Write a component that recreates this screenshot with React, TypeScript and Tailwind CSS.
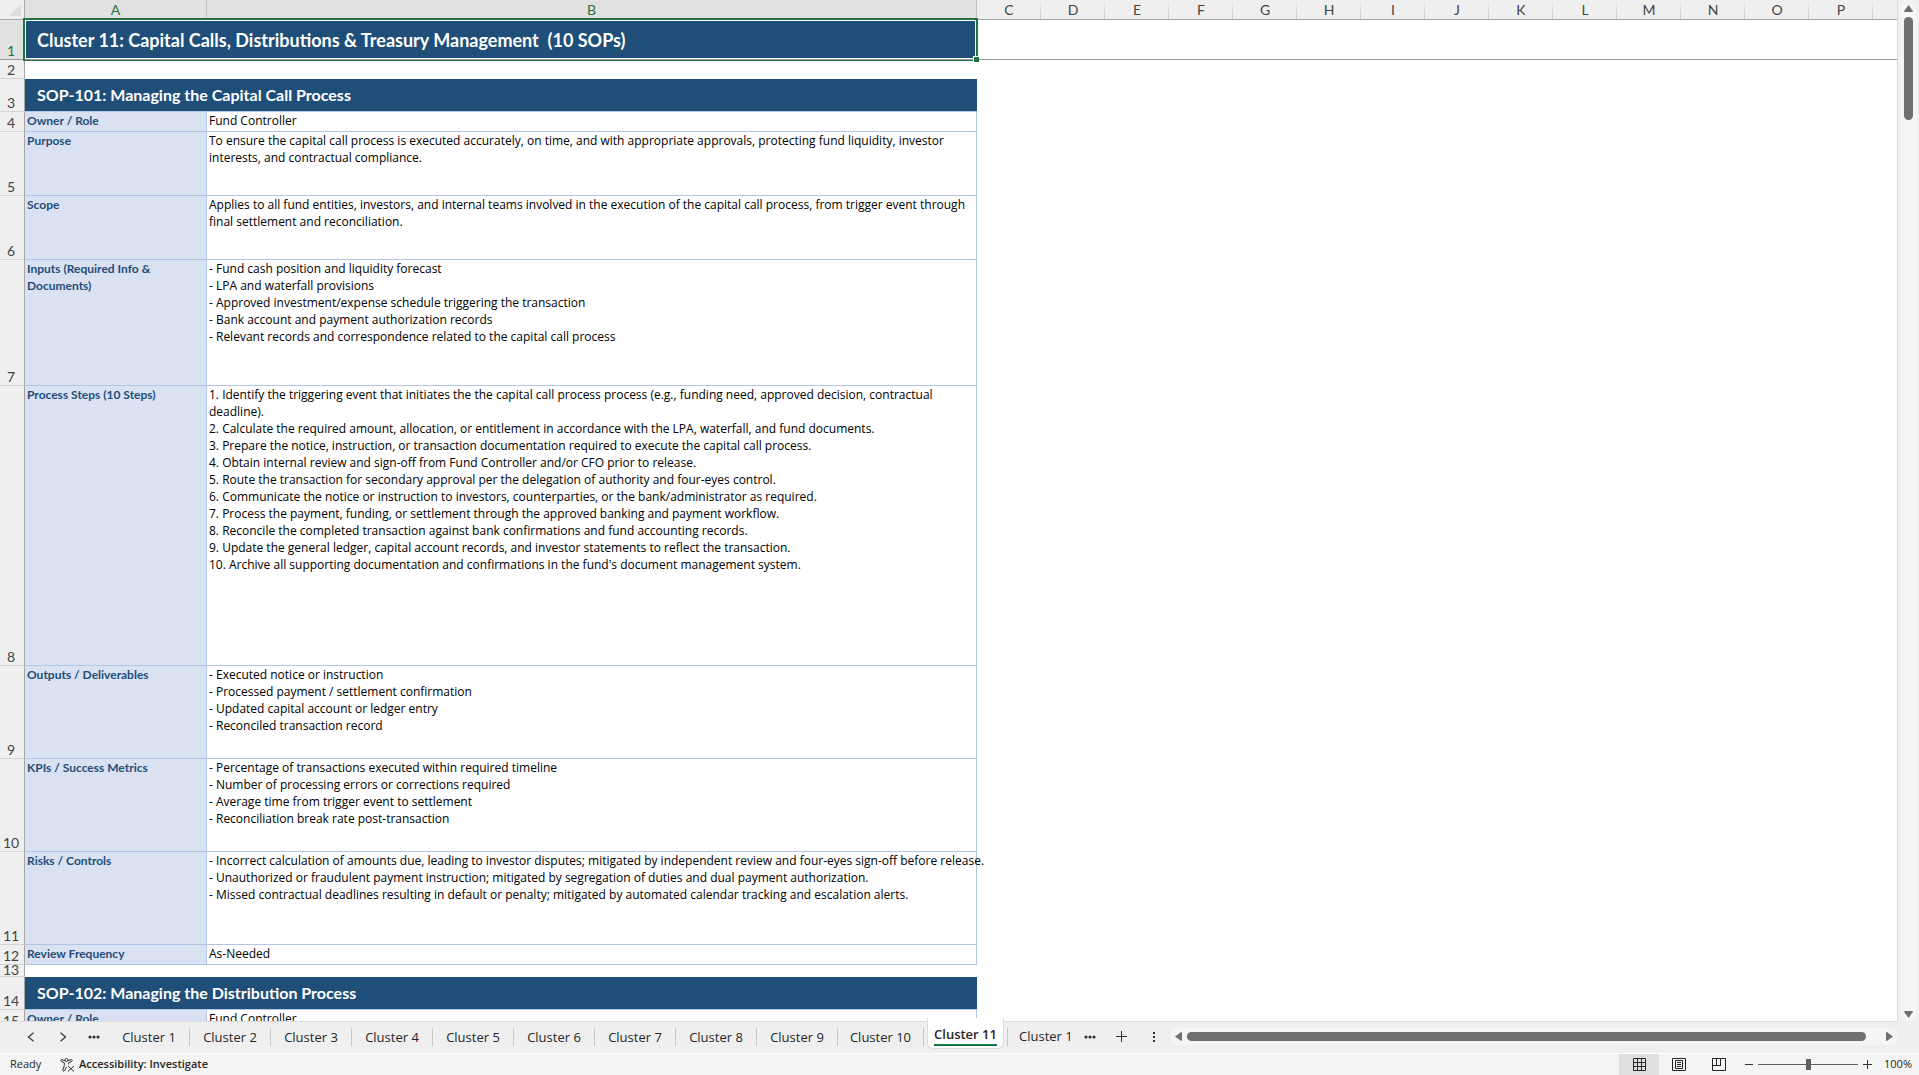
import React from "react";

type Row = {
  num: number;
  height: string;
  kind: "title" | "heading" | "field" | "blank";
  label?: string;
  lines?: string[];
};

const rows: Row[] = [
  {
    num: 1,
    height: "h-10",
    kind: "title",
    label: "Cluster 11: Capital Calls, Distributions & Treasury Management  (10 SOPs)",
  },
  { num: 2, height: "h-[19px]", kind: "blank" },
  {
    num: 3,
    height: "h-[33px]",
    kind: "heading",
    label: "SOP-101: Managing the Capital Call Process",
  },
  {
    num: 4,
    height: "h-5",
    kind: "field",
    label: "Owner / Role",
    lines: ["Fund Controller"],
  },
  {
    num: 5,
    height: "h-16",
    kind: "field",
    label: "Purpose",
    lines: [
      "To ensure the capital call process is executed accurately, on time, and with appropriate approvals, protecting fund liquidity, investor",
      "interests, and contractual compliance.",
    ],
  },
  {
    num: 6,
    height: "h-16",
    kind: "field",
    label: "Scope",
    lines: [
      "Applies to all fund entities, investors, and internal teams involved in the execution of the capital call process, from trigger event through",
      "final settlement and reconciliation.",
    ],
  },
  {
    num: 7,
    height: "h-[126px]",
    kind: "field",
    label: "Inputs (Required Info & Documents)",
    lines: [
      "- Fund cash position and liquidity forecast",
      "- LPA and waterfall provisions",
      "- Approved investment/expense schedule triggering the transaction",
      "- Bank account and payment authorization records",
      "- Relevant records and correspondence related to the capital call process",
    ],
  },
  {
    num: 8,
    height: "h-[280px]",
    kind: "field",
    label: "Process Steps (10 Steps)",
    lines: [
      "1. Identify the triggering event that initiates the the capital call process process (e.g., funding need, approved decision, contractual",
      "deadline).",
      "2. Calculate the required amount, allocation, or entitlement in accordance with the LPA, waterfall, and fund documents.",
      "3. Prepare the notice, instruction, or transaction documentation required to execute the capital call process.",
      "4. Obtain internal review and sign-off from Fund Controller and/or CFO prior to release.",
      "5. Route the transaction for secondary approval per the delegation of authority and four-eyes control.",
      "6. Communicate the notice or instruction to investors, counterparties, or the bank/administrator as required.",
      "7. Process the payment, funding, or settlement through the approved banking and payment workflow.",
      "8. Reconcile the completed transaction against bank confirmations and fund accounting records.",
      "9. Update the general ledger, capital account records, and investor statements to reflect the transaction.",
      "10. Archive all supporting documentation and confirmations in the fund's document management system.",
    ],
  },
  {
    num: 9,
    height: "h-[93px]",
    kind: "field",
    label: "Outputs / Deliverables",
    lines: [
      "- Executed notice or instruction",
      "- Processed payment / settlement confirmation",
      "- Updated capital account or ledger entry",
      "- Reconciled transaction record",
    ],
  },
  {
    num: 10,
    height: "h-[93px]",
    kind: "field",
    label: "KPIs / Success Metrics",
    lines: [
      "- Percentage of transactions executed within required timeline",
      "- Number of processing errors or corrections required",
      "- Average time from trigger event to settlement",
      "- Reconciliation break rate post-transaction",
    ],
  },
  {
    num: 11,
    height: "h-[93px]",
    kind: "field",
    label: "Risks / Controls",
    lines: [
      "- Incorrect calculation of amounts due, leading to investor disputes; mitigated by independent review and four-eyes sign-off before release.",
      "- Unauthorized or fraudulent payment instruction; mitigated by segregation of duties and dual payment authorization.",
      "- Missed contractual deadlines resulting in default or penalty; mitigated by automated calendar tracking and escalation alerts.",
    ],
  },
  {
    num: 12,
    height: "h-5",
    kind: "field",
    label: "Review Frequency",
    lines: ["As-Needed"],
  },
  { num: 13, height: "h-3", kind: "blank" },
  {
    num: 14,
    height: "h-[33px]",
    kind: "heading",
    label: "SOP-102: Managing the Distribution Process",
  },
  {
    num: 15,
    height: "h-5",
    kind: "field",
    label: "Owner / Role",
    lines: ["Fund Controller"],
  },
];

const columns = "CDEFGHIJKLMNOP".split("");

const sheets = [1, 2, 3, 4, 5, 6, 7, 8, 9, 10];

const columnRule =
  "bg-[linear-gradient(to_bottom,transparent,#c6c6c6)] bg-[length:1px_100%] bg-right bg-no-repeat";

const RowCells = ({ row }: { row: Row }) => {
  if (row.kind === "title") {
    return (
      <>
        <td
          colSpan={2}
          className="relative bg-[#1f4e78] pl-3 align-middle text-[18px] leading-5 font-bold whitespace-pre text-white"
        >
          {row.label}
          {/* Active cell outline and fill handle */}
          <span className="absolute -top-0.5 -right-px -bottom-px -left-0.5 border-2 border-[#217346]">
            <span className="block h-full border border-white"></span>
          </span>
          <span className="absolute inset-x-0 bottom-0 h-px bg-[#9b9b9b]"></span>
          <span className="absolute -right-0.5 -bottom-0.5 size-[6px] border-t border-l border-white bg-[#217346]"></span>
        </td>
        <td colSpan={15} className="border-b border-[#9b9b9b]"></td>
      </>
    );
  }

  if (row.kind === "blank") {
    return <td colSpan={17}></td>;
  }

  if (row.kind === "heading") {
    return (
      <>
        <td
          colSpan={2}
          className="border-b border-[#b4c6e7] bg-[#1f4e78] pl-3 align-middle text-[16px] leading-5 font-bold text-white"
        >
          {row.label}
        </td>
        <td colSpan={15}></td>
      </>
    );
  }

  return (
    <>
      <td className="border-r border-b border-[#b4c6e7] bg-[#d9e1f2] pl-0.5 align-top font-bold text-[#1f4e78]">
        {row.label}
      </td>
      <td className="border-r border-b border-[#b4c6e7] pl-0.5 align-top font-['Open_Sans',sans-serif] whitespace-nowrap text-black">
        {row.lines?.map((line) => (
          <p key={line}>{line}</p>
        ))}
      </td>
      <td colSpan={15}></td>
    </>
  );
};

const Sheet = () => (
  <div className="min-w-0 flex-1 overflow-hidden border-r border-b border-[#dcdcdc] bg-white">
    <table className="w-full table-fixed border-separate border-spacing-0 font-['Lato',sans-serif] text-[12px] leading-[17px]">
      <colgroup>
        <col className="w-[25px]" />
        <col className="w-[182px]" />
        <col className="w-[770px]" />
        {columns.map((name) => (
          <col key={name} className="w-16" />
        ))}
        <col />
      </colgroup>
      <thead className="text-[14px] leading-[19px] text-[#444]">
        <tr className="h-5 bg-[#efefef]">
          <th className="border-r border-b border-[#a6a6a6] align-bottom">
            <svg viewBox="0 0 12 12" className="mr-[3px] mb-[3px] ml-auto size-3">
              <path d="M12 0v12H0z" fill="#dcdcdc" />
            </svg>
          </th>
          {["A", "B"].map((name) => (
            <th
              key={name}
              className="border-r border-b border-[#a6a6a6] border-r-[#c0c0c0] bg-[#e1e1e1] font-normal text-[#217346]"
            >
              {name}
            </th>
          ))}
          {columns.map((name) => (
            <th
              key={name}
              className={`border-b border-[#a6a6a6] font-normal ${columnRule}`}
            >
              {name}
            </th>
          ))}
          <th className="border-b border-[#a6a6a6]"></th>
        </tr>
      </thead>
      <tbody>
        {rows.map((row) => (
          <tr key={row.num} className={row.height}>
            <th
              scope="row"
              className={`border-r border-b border-r-[#a6a6a6] pr-0.5 align-bottom text-[14px] leading-[9px] font-normal ${
                row.num === 1
                  ? "border-b-[#9b9b9b] bg-[#e1e1e1] pb-1 text-[#217346]"
                  : row.num === 13
                    ? "border-b-[#d4d4d4] bg-[#efefef] pb-0.5 text-[#444]"
                    : "border-b-[#d4d4d4] bg-[#efefef] pb-1 text-[#444]"
              }`}
            >
              {row.num}
            </th>
            <RowCells row={row} />
          </tr>
        ))}
      </tbody>
    </table>
  </div>
);

const VerticalScroll = () => (
  <div className="flex w-[21px] justify-center bg-[#efefef]">
    <div className="flex w-[17px] flex-col items-center rounded-full bg-[#f5f5f5] pt-[5px] pb-1">
      <button aria-label="Scroll up">
        <svg viewBox="0 0 9 7" className="h-[7px] w-[9px]" fill="#6f6f6f">
          <path d="M4.5 0 9 6.2 8.4 7H.6L0 6.2z" />
        </svg>
      </button>
      <div className="mt-[5px] h-[103px] w-[9px] rounded-full bg-[#6f6f6f]"></div>
      <button aria-label="Scroll down" className="mt-auto">
        <svg viewBox="0 0 9 7" className="h-[7px] w-[9px]" fill="#6f6f6f">
          <path d="M4.5 7 9 .8 8.4 0H.6L0 .8z" />
        </svg>
      </button>
    </div>
  </div>
);

const TabBar = () => (
  <div className="flex h-[31px] shrink-0 items-center bg-[#efefef] pb-0.5 font-['Open_Sans',sans-serif] text-[13px] text-[#262626]">
    <button aria-label="Previous sheet" className="ml-[15px] flex w-8 justify-center">
      <svg viewBox="0 0 8 10" className="h-[10px] w-2" fill="none" stroke="#444" strokeWidth="1.4">
        <path d="M6.5.8 1.5 5l5 4.2" />
      </svg>
    </button>
    <button aria-label="Next sheet" className="flex w-8 justify-center">
      <svg viewBox="0 0 8 10" className="h-[10px] w-2" fill="none" stroke="#444" strokeWidth="1.4">
        <path d="m1.5.8 5 4.2-5 4.2" />
      </svg>
    </button>
    <button aria-label="More sheets" className="flex w-[30px] justify-center">
      <svg viewBox="0 0 12 4" className="h-1 w-3" fill="#333">
        <circle cx="2" cy="2" r="1.6" />
        <circle cx="6" cy="2" r="1.6" />
        <circle cx="10" cy="2" r="1.6" />
      </svg>
    </button>
    {sheets.map((n) => (
      <button
        key={n}
        className={`h-[18px] border-r border-[#c8c8c8] leading-[18px] ${
          n === 10 ? "w-[86px]" : "w-[81px]"
        }`}
      >
        Cluster {n}
      </button>
    ))}
    <button className="-mt-1 ml-[3px] flex h-[31px] w-[77px] shrink-0 items-start justify-center self-start rounded-b-md border border-t-0 border-[#dcdcdc] bg-white pt-1.5 font-semibold">
      <span className="border-b-2 border-[#107c41] leading-5 whitespace-nowrap">
        Cluster 11
      </span>
    </button>
    <span className="ml-[3px] h-[18px] w-px bg-[#c8c8c8]"></span>
    <button className="ml-[11px] whitespace-nowrap">Cluster 1</button>
    <button aria-label="Following sheets" className="ml-[11px]">
      <svg viewBox="0 0 12 4" className="h-1 w-3" fill="#333">
        <circle cx="2" cy="2" r="1.6" />
        <circle cx="6" cy="2" r="1.6" />
        <circle cx="10" cy="2" r="1.6" />
      </svg>
    </button>
    <button aria-label="New sheet" className="ml-5">
      <svg viewBox="0 0 12 12" className="size-3" stroke="#333" strokeWidth="1">
        <path d="M5.5 0v11M0 5.5h11" />
      </svg>
    </button>
    <button aria-label="Resize tabs" className="ml-[25px]">
      <svg viewBox="0 0 3 10" className="h-[10px] w-[3px]" fill="#333">
        <path d="M0 0h2v2H0zM0 4h2v2H0zM0 8h2v2H0z" />
      </svg>
    </button>
    <div className="mr-[21px] ml-[14px] flex h-[17px] min-w-0 flex-1 items-center rounded-full bg-[#f5f5f5] px-[5px]">
      <button aria-label="Scroll left">
        <svg viewBox="0 0 7 9" className="h-[9px] w-[7px]" fill="#6f6f6f">
          <path d="M0 4.5 6.2 0l.8.6v7.8l-.8.6z" />
        </svg>
      </button>
      <div className="mr-5 ml-[5px] h-[9px] flex-1 rounded-full bg-[#6f6f6f]"></div>
      <button aria-label="Scroll right">
        <svg viewBox="0 0 7 9" className="h-[9px] w-[7px]" fill="#6f6f6f">
          <path d="M7 4.5.8 0 0 .6v7.8l.8.6z" />
        </svg>
      </button>
    </div>
  </div>
);

const StatusBar = () => (
  <footer className="flex h-[22px] shrink-0 items-center border-t border-white bg-[#f4f4f4] font-['Open_Sans',sans-serif] text-[11px] text-[#262626]">
    <span className="w-[51px] pl-[10px]">Ready</span>
    <button className="ml-[9px] flex items-center gap-1 font-semibold">
      <svg viewBox="0 0 15 14" className="h-[14px] w-[15px]" fill="none" stroke="#333" strokeWidth="1">
        <circle cx="6.5" cy="2" r="1.5" />
        <path d="M5 2.6 1.8 1.7C.6 1.5.3 3 1.4 3.5L4.3 4.7v2.8L2.8 12c-.2 1.2 1.2 1.7 1.7.6L6.5 9M8 2.6l3.2-.9c1.2-.2 1.5 1.3.4 1.8L8.7 4.7v1.8M8 8l6 5.5M14 8l-6 5.5" />
      </svg>
      Accessibility: Investigate
    </button>
    <div className="ml-auto flex h-full">
      <button aria-label="Normal view" className="flex w-10 items-center justify-center bg-[#dfdfdf]">
        <svg viewBox="0 0 13 13" className="size-[13px]" fill="none" stroke="#262626">
          <path d="M.5.5h12v12H.5zM4.5 0v13M8.5 0v13M0 4.5h13M0 8.5h13" />
        </svg>
      </button>
      <button aria-label="Page layout view" className="flex w-10 items-center justify-center">
        <svg viewBox="0 0 14 13" className="h-[13px] w-[14px]" fill="none" stroke="#262626">
          <path d="M.5.5h13v12H.5zM3.5 2.5h7v8h-7zM5 4.5h4M5 6.5h4M5 8.5h4" />
        </svg>
      </button>
      <button aria-label="Page break preview" className="flex w-10 items-center justify-center">
        <svg viewBox="0 0 14 13" className="h-[13px] w-[14px]" fill="none" stroke="#262626">
          <path d="M.5.5h13v12H.5zM4.5 0v7.5M8.5 0v7.5M0 7.5h9" />
        </svg>
      </button>
    </div>
    <button aria-label="Zoom out" className="ml-[6px]">
      <svg viewBox="0 0 8 9" className="h-[9px] w-2" stroke="#333">
        <path d="M0 4.5h8" />
      </svg>
    </button>
    <input
      type="range"
      min={10}
      max={190}
      defaultValue={100}
      aria-label="Zoom"
      className="mx-[5px] h-[11px] w-[100px] appearance-none bg-[linear-gradient(#606060,#606060)] bg-[length:100%_1px] bg-center bg-no-repeat [&::-webkit-slider-thumb]:h-[11px] [&::-webkit-slider-thumb]:w-[5px] [&::-webkit-slider-thumb]:appearance-none [&::-webkit-slider-thumb]:bg-[#606060]"
    />
    <button aria-label="Zoom in">
      <svg viewBox="0 0 9 9" className="size-[9px]" stroke="#333">
        <path d="M0 4.5h9M4.5 0v9" />
      </svg>
    </button>
    <button className="mr-[7px] ml-3 w-7 text-right">100%</button>
  </footer>
);

const App = () => {
  return (
    <div className="flex h-screen flex-col overflow-hidden bg-[#efefef]">
      <main className="flex min-h-0 flex-1">
        <Sheet />
        <VerticalScroll />
      </main>
      <TabBar />
      <StatusBar />
    </div>
  );
};

export default App;
